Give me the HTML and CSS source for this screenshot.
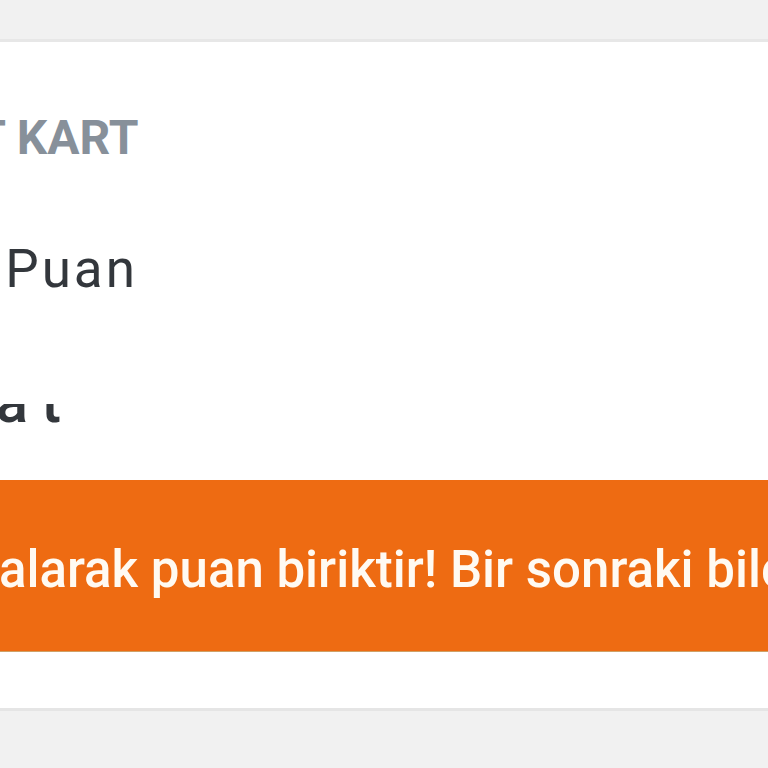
FILE: index.html
```html
<!DOCTYPE html>
<html lang="tr">
<head>
<meta charset="utf-8">
<title>Kent Kart</title>
<link rel="stylesheet" href="styles.css">
</head>
<body>
<main class="page">
  <section class="card">
    <div class="content">
      <div class="label">KENT KART</div>
      <div class="points">250 Puan</div>
      <div class="clip"><div class="clip-line">Saat</div></div>
    </div>
    <div class="banner"><span class="banner-text">Bilet satın alarak puan biriktir! Bir sonraki biletinde kullan!</span></div>
  </section>
</main>
</body>
</html>
```
FILE: styles.css
```css
html, body {
  margin: 0;
  padding: 0;
}
body {
  background: #f1f1f1;
  width: 768px;
  height: 768px;
  overflow: hidden;
  font-family: Roboto, "Liberation Sans", sans-serif;
}
.page {
  padding-top: 39px;
}
.card {
  background: #ffffff;
  border-top: 3px solid #e7e7e7;
  border-bottom: 3px solid #e5e5e5;
  padding-top: 66px;
  padding-bottom: 56px;
  overflow: hidden;
}
.content {
  display: flex;
  flex-direction: column;
  white-space: nowrap;
}
.label {
  font-size: 48px;
  line-height: 60px;
  font-weight: 700;
  color: #87909a;
  margin-left: -114.4px;
}
.points {
  margin-top: 71px;
  font-size: 53px;
  line-height: 60px;
  letter-spacing: 3px;
  color: #33373c;
  margin-left: -109.3px;
}
.clip {
  margin-top: 105px;
  height: 28px;
  overflow: hidden;
  display: flex;
  align-items: flex-end;
}
.clip-line {
  font-size: 60px;
  line-height: 60px;
  font-weight: 500;
  letter-spacing: 13px;
  color: #33373c;
  margin-left: -99px;
}
.banner {
  margin-top: 48px;
  height: 171px;
  background: #ee6b12;
  border-bottom: 1px solid #cfa066;
  display: flex;
  align-items: center;
  overflow: hidden;
  white-space: nowrap;
}
.banner-text {
  font-size: 51px;
  line-height: 51px;
  font-weight: 500;
  color: #fffaf2;
  margin-left: -241.3px;
  padding-top: 7.5px;
}
```
